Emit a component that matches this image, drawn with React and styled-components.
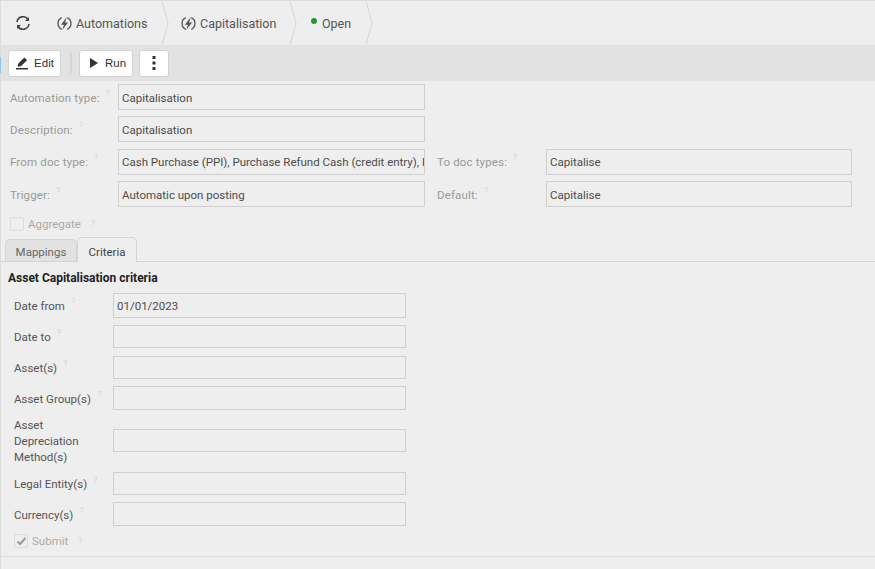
import React from "react";
import styled, { createGlobalStyle } from "styled-components";

const Global = createGlobalStyle`
  html, body { margin: 0; padding: 0; }
  body {
    width: 875px;
    height: 569px;
    overflow: hidden;
    background: #eeeeee;
    font-family: Roboto, "Noto Sans", sans-serif;
    font-size: 11.5px;
    color: #444;
  }
`;

const Page = styled.div`
  height: 569px;
  box-sizing: border-box;
  border-top: 1px solid #dcdcdc;
  border-left: 1px solid #dcdcdc;
  display: flex;
  flex-direction: column;
`;

const Crumbs = styled.div`
  height: 44px;
  display: flex;
  align-items: center;
`;

const Refresh = styled.div`
  width: 44px;
  display: flex;
  justify-content: center;
  color: #444;
`;

const Crumb = styled.div`
  position: relative;
  height: 44px;
  width: ${(p) => p.$w}px;
  display: flex;
  align-items: center;
  gap: ${(p) => p.$gap || 4}px;
  padding-left: ${(p) => p.$pad}px;
  box-sizing: border-box;
  font-size: 12.5px;
  color: #555;
`;

const Chevron = styled.svg`
  position: absolute;
  right: -6px;
  top: 0;
`;

const Dot = styled.span`
  width: 6px;
  height: 6px;
  border-radius: 50%;
  background: #1f9a2f;
  margin-top: -5px;
`;

const Toolbar = styled.div`
  position: relative;
  height: 36px;
  background: #e2e2e2;
  display: flex;
  align-items: center;
  padding-left: 7px;
  gap: 6px;

  &::before {
    content: "";
    position: absolute;
    left: -1px;
    top: 12px;
    width: 1px;
    height: 16px;
    background: #8cc8e8;
  }
`;

const Button = styled.button`
  height: 27px;
  width: ${(p) => p.$w}px;
  padding: 0 0 0 ${(p) => p.$pad || 0}px;
  background: #fff;
  border: 1px solid #d2d2d2;
  border-radius: 3px;
  display: flex;
  align-items: center;
  justify-content: center;
  gap: ${(p) => p.$gap || 4}px;
  font-family: "Liberation Sans", sans-serif;
  font-size: 11.5px;
  color: #333;
`;

const Divider = styled.span`
  width: 2px;
  height: 20px;
  background: #d4d4d4;
  margin: 0 1px 0 3px;
`;

const Form = styled.div`
  padding: 0 0 0 9px;
  display: flex;
  flex-direction: column;
`;

const Row = styled.div`
  display: flex;
  align-items: center;
  height: 32.3px;
`;

const Label = styled.span`
  width: ${(p) => p.$w}px;
  flex: none;
  color: #999;
  white-space: nowrap;
  padding-top: 1px;
  letter-spacing: 0.15px;
`;

const Hint = styled.sup`
  color: #dccff0;
  font-size: 9px;
  margin-left: 6px;
  line-height: 0;
`;

const Field = styled.div`
  width: ${(p) => p.$w}px;
  height: ${(p) => p.$h || 26}px;
  flex: none;
  box-sizing: border-box;
  border: 1px solid #cfcfcf;
  padding: 1px 3px 0;
  display: flex;
  align-items: center;
  overflow: hidden;
  white-space: nowrap;
  color: #4c4c4c;
`;

const SecondLabel = styled(Label)`
  margin-left: 12px;
`;

const CheckRow = styled.div`
  display: flex;
  align-items: center;
  gap: 4px;
  height: ${(p) => p.$h}px;
  box-sizing: border-box;
  padding-left: ${(p) => p.$pad || 0}px;
  padding-top: ${(p) => p.$top || 0}px;
  color: #aaa;
`;

const Box = styled.span`
  width: 14px;
  height: 14px;
  box-sizing: border-box;
  border: 1px solid #dcdcdc;
  border-radius: 2px;
  display: flex;
  align-items: center;
  justify-content: center;
`;

const Tabs = styled.div`
  display: flex;
  height: 25px;
  padding-left: 4px;
  border-bottom: 1px solid #d4d4d4;
`;

const Tab = styled.div`
  width: ${(p) => p.$w}px;
  box-sizing: border-box;
  height: ${(p) => (p.$active ? 25 : 22)}px;
  margin-top: ${(p) => (p.$active ? 1 : 3)}px;
  padding-top: ${(p) => (p.$active ? 4 : 3)}px;
  display: flex;
  align-items: center;
  justify-content: center;
  color: ${(p) => (p.$active ? "#444" : "#666")};
  background: ${(p) => (p.$active ? "#eeeeee" : "#e2e2e2")};
  border: 1px solid #d4d4d4;
  border-bottom: none;
  border-radius: 5px 5px 0 0;
`;

const Criteria = styled.div`
  padding: 8px 0 0 7px;
  display: flex;
  flex-direction: column;
`;

const Heading = styled.div`
  font-size: 12px;
  font-weight: 700;
  color: #222;
  height: 17px;
  line-height: 17px;
  margin-bottom: 3px;
`;

const CritRow = styled.div`
  display: flex;
  align-items: center;
  padding-left: 6px;
  height: ${(p) => p.$h}px;
`;

const CritLabel = styled.span`
  width: 99px;
  flex: none;
  box-sizing: border-box;
  padding-top: 1px;
  padding-right: ${(p) => (p.$wrap ? 14 : 0)}px;
  color: #555;
  line-height: 16px;
`;

const Footer = styled.div`
  margin-top: auto;
  height: 12px;
  border-top: 1px solid #dcdcdc;
`;

const Bolt = () => (
  <svg width="15" height="15" viewBox="0 0 16 16" fill="none">
    <path d="M5 1.8A6.9 6.9 0 0 0 5 14.2M11 1.8A6.9 6.9 0 0 1 11 14.2" stroke="#555" strokeWidth="1.4" />
    <path d="M10.4 1 4.2 9.2h3.2L5.6 15 11.8 6.8H8.6z" fill="#555" />
  </svg>
);

const Sep = () => (
  <Chevron width="8" height="44" viewBox="0 0 8 44" fill="none">
    <path d="M1 0 7 22 1 44" stroke="#d4d4d4" />
  </Chevron>
);

const rows = [
  { label: "Date from", value: "01/01/2023", h: 31, fh: 25 },
  { label: "Date to", value: "", h: 31, fh: 23 },
  { label: "Asset(s)", value: "", h: 31, fh: 23 },
  { label: "Asset Group(s)", value: "", h: 30, fh: 24 },
];

export default function App() {
  return (
    <Page>
      <Global />
      <Crumbs>
        <Refresh>
          <svg width="16" height="16" viewBox="0 0 16 16" fill="none" stroke="#444" strokeWidth="1.6">
            <path d="M2 7a6 6 0 0 1 11-2.5M14 9a6 6 0 0 1-11 2.5" />
            <path d="M14 2v4h-4zM2 14v-4h4z" fill="#444" stroke="none" />
          </svg>
        </Refresh>
        <Crumb $w={118} $pad={12}><Bolt />Automations<Sep /></Crumb>
        <Crumb $w={128} $pad={18}><Bolt />Capitalisation<Sep /></Crumb>
        <Crumb $w={76} $pad={20} $gap={5}><Dot />Open<Sep /></Crumb>
      </Crumbs>
      <Toolbar>
        <Button $w={53} $gap={5}>
          <svg width="14" height="14" viewBox="0 0 14 14" fill="#333">
            <path d="M1 13.4h12v-1.3H1zM2.6 10.8l.7-3.2L9.4 1.6l2.6 2.6-6.1 6z" />
          </svg>
          Edit
        </Button>
        <Divider />
        <Button $w={54} $gap={7} $pad={3}>
          <svg width="9" height="10" viewBox="0 0 9 10" fill="#333"><path d="M1 0l8 5-8 5z" /></svg>
          Run
        </Button>
        <Button $w={30}>
          <svg width="4" height="16" viewBox="0 0 4 16" fill="#333">
            <rect x="0.5" y="1" width="3" height="3" /><rect x="0.5" y="6.5" width="3" height="3" /><rect x="0.5" y="12" width="3" height="3" />
          </svg>
        </Button>
      </Toolbar>
      <Form>
        <Row><Label $w={108}>Automation type:<Hint>?</Hint></Label><Field $w={307}>Capitalisation</Field></Row>
        <Row><Label $w={108}>Description:<Hint>?</Hint></Label><Field $w={307}>Capitalisation</Field></Row>
        <Row>
          <Label $w={108}>From doc type:<Hint>?</Hint></Label>
          <Field $w={307}>Cash Purchase (PPI), Purchase Refund Cash (credit entry), P</Field>
          <SecondLabel $w={109}>To doc types:<Hint>?</Hint></SecondLabel>
          <Field $w={306}>Capitalise</Field>
        </Row>
        <Row>
          <Label $w={108}>Trigger:<Hint>?</Hint></Label>
          <Field $w={307}>Automatic upon posting</Field>
          <SecondLabel $w={109}>Default:<Hint>?</Hint></SecondLabel>
          <Field $w={306}>Capitalise</Field>
        </Row>
        <CheckRow $h={26} $top={1}><Box />Aggregate<Hint>?</Hint></CheckRow>
      </Form>
      <Tabs>
        <Tab $w={72}>Mappings</Tab>
        <Tab $w={60} $active>Criteria</Tab>
      </Tabs>
      <Criteria>
        <Heading>Asset Capitalisation criteria</Heading>
        {rows.map((r) => (
          <CritRow key={r.label} $h={r.h}><CritLabel>{r.label}<Hint>?</Hint></CritLabel><Field $w={293} $h={r.fh}>{r.value}</Field></CritRow>
        ))}
        <CritRow $h={55}><CritLabel $wrap>Asset Depreciation Method(s)</CritLabel><Field $w={293} $h={23} /></CritRow>
        <CritRow $h={31}><CritLabel>Legal Entity(s)<Hint>?</Hint></CritLabel><Field $w={293} $h={23} /></CritRow>
        <CritRow $h={30}><CritLabel>Currency(s)<Hint>?</Hint></CritLabel><Field $w={293} $h={24} /></CritRow>
        <CheckRow $h={24} $pad={6}>
          <Box><svg width="11" height="11" viewBox="0 0 11 11" fill="none" stroke="#999" strokeWidth="2"><path d="M1.5 5.5 4 8l5.5-6" /></svg></Box>
          Submit<Hint>?</Hint>
        </CheckRow>
      </Criteria>
      <Footer />
    </Page>
  );
}
